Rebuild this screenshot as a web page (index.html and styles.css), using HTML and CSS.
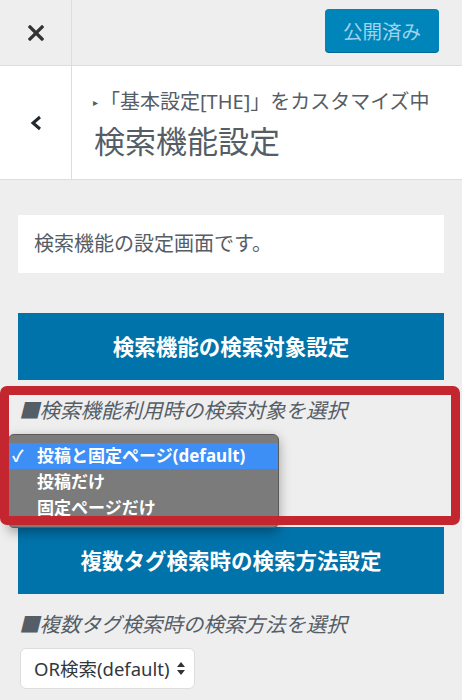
FILE: index.html
```html
<!DOCTYPE html>
<html lang="ja">
<head>
    <meta charset="UTF-8">
    <meta name="viewport" content="width=device-width, initial-scale=1.0">
    <title>検索機能設定</title>
    <link rel="stylesheet" href="styles.css">
</head>
<body>
    <div class="topbar">
        <button class="close" aria-label="閉じる">
            <svg width="16" height="16" viewBox="0 0 16 16"><path d="M2 2L14 14M14 2L2 14" stroke="#333" stroke-width="3.2" stroke-linecap="square"/></svg>
        </button>
        <div class="actions">
            <button class="publish">公開済み</button>
        </div>
    </div>

    <div class="panel-head">
        <button class="back" aria-label="戻る">
            <svg width="12" height="16" viewBox="0 0 12 16"><path d="M10 2L3 8L10 14" fill="none" stroke="#23282d" stroke-width="3"/></svg>
        </button>
        <div class="titles">
            <div class="crumb"><span class="arrow">▸</span>「基本設定[THE]」をカスタマイズ中</div>
            <h2 class="panel-title">検索機能設定</h2>
        </div>
    </div>

    <div class="controls">
        <p class="desc">検索機能の設定画面です。</p>

        <h3 class="section-title">検索機能の検索対象設定</h3>
        <div class="control first">
            <label class="control-label">■検索機能利用時の検索対象を選択</label>
            <div class="select-wrap">
                <div class="select"></div>
                <ul class="menu">
                    <li class="selected"><span class="check">✓</span>投稿と固定ページ(default)</li>
                    <li>投稿だけ</li>
                    <li>固定ページだけ</li>
                </ul>
            </div>
            <div class="highlight"></div>
        </div>

        <h3 class="section-title">複数タグ検索時の検索方法設定</h3>
        <div class="control">
            <label class="control-label">■複数タグ検索時の検索方法を選択</label>
            <div class="select">
                OR検索(default)
                <svg class="updown" width="8" height="13" viewBox="0 0 8 13"><path d="M4 0L8 5H0Z M0 8H8L4 13Z" fill="#333"/></svg>
            </div>
        </div>
    </div>
</body>
</html>
```

FILE: styles.css
```css
body {
    margin: 0;
    background: #eeeeee;
    font-family: "Noto Sans", "Noto Sans CJK JP", sans-serif;
    color: #555d66;
    width: 462px;
    overflow: hidden;
}

button {
    font-family: inherit;
    border: none;
    background: none;
    padding: 0;
    cursor: pointer;
}

.topbar {
    display: flex;
    height: 65px;
    border-bottom: 1px solid #dddddd;
}

.close {
    width: 72px;
    border-right: 1px solid #dddddd;
    display: flex;
    align-items: center;
    justify-content: center;
}

.actions {
    flex: 1;
    display: flex;
    justify-content: flex-end;
    align-items: flex-start;
    padding: 9px 23px 0 0;
}

.publish {
    width: 114px;
    height: 43px;
    background: #0085ba;
    color: #9fd3ea;
    border-radius: 4px;
    font-size: 19.5px;
    box-shadow: 0 1px 0 #006799;
}

.panel-head {
    display: flex;
    background: #ffffff;
    border-bottom: 1px solid #dddddd;
}

.back {
    width: 72px;
    border-right: 1px solid #dddddd;
    display: flex;
    align-items: center;
    justify-content: center;
}

.titles {
    padding: 24px 0 19px 21px;
}

.crumb {
    font-size: 20px;
    line-height: 24px;
    color: #555d66;
    white-space: nowrap;
}

.crumb .arrow {
    font-size: 10px;
    display: inline-block;
    vertical-align: 3px;
    margin-right: 2px;
}

.panel-title {
    margin: 8px 0 0 1px;
    font-size: 31px;
    line-height: 38px;
    font-weight: normal;
    color: #555d66;
}

.controls {
    padding: 35px 18px 0;
}

.desc {
    margin: 0;
    background: #ffffff;
    height: 58px;
    line-height: 58px;
    padding: 0 16px;
    font-size: 20px;
    color: #555d66;
}

.section-title {
    margin: 0;
    background: #0073aa;
    color: #ffffff;
    font-size: 21.5px;
    font-weight: bold;
    text-align: center;
    height: 67px;
    line-height: 67px;
}

.desc + .section-title {
    margin-top: 40px;
}

.control {
    position: relative;
    padding: 18px 0 0;
}

.control.first {
    padding-bottom: 50px;
}

.control-label {
    display: block;
    font-size: 20.5px;
    line-height: 24px;
    font-style: italic;
    color: #555d66;
    margin-left: 1px;
}

.select-wrap {
    position: relative;
    margin-top: 14px;
}

.select {
    position: relative;
    width: 175px;
    height: 41px;
    box-sizing: border-box;
    margin-top: 12px;
    margin-left: 2px;
    padding-left: 13px;
    background: #ffffff;
    border: 1px solid #dddddd;
    border-radius: 6px;
    font-size: 18.5px;
    line-height: 39px;
    color: #32373c;
}

.select-wrap .select {
    margin-top: 0;
}

.updown {
    position: absolute;
    right: 9px;
    top: 13px;
}

.menu {
    position: absolute;
    left: -10px;
    top: -2px;
    width: 271px;
    height: 94px;
    margin: 0;
    padding: 8px 0 0;
    list-style: none;
    box-sizing: border-box;
    background: #7b7b7b;
    border: 1px solid #5a5a5a;
    border-radius: 6px;
    box-shadow: 0 4px 12px rgba(0, 0, 0, 0.35);
}

.menu li {
    height: 26px;
    line-height: 26px;
    padding-left: 28px;
    color: #ffffff;
    font-size: 17px;
    font-weight: bold;
    position: relative;
}

.menu li.selected {
    background: #3d8ef5;
}

.check {
    position: absolute;
    left: 3px;
    top: 0;
    font-size: 16px;
}

.highlight {
    position: absolute;
    top: 6px;
    left: -18px;
    right: -16px;
    bottom: 2px;
    border: 9px solid #c3262e;
    border-radius: 7px;
    z-index: 2;
}
```
